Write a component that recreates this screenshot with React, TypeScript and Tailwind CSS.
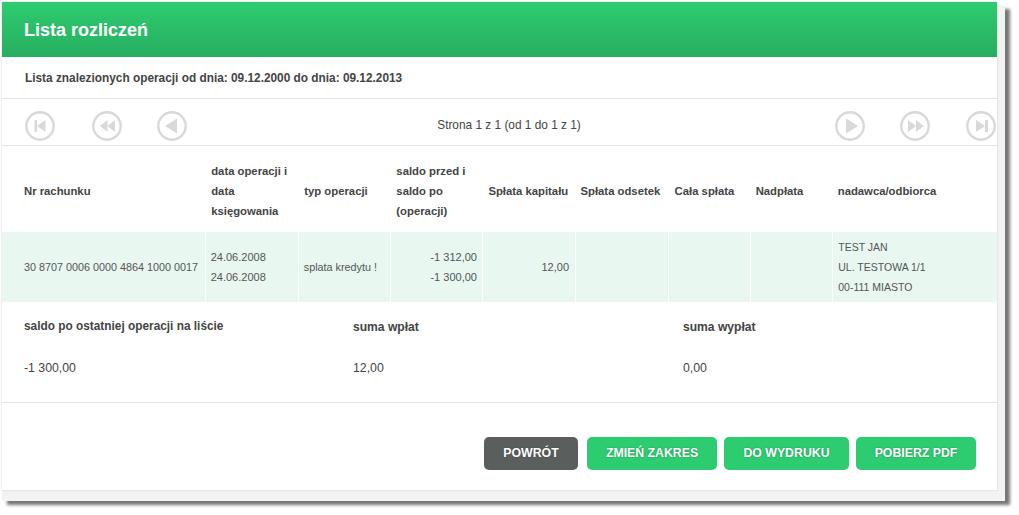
const font = { fontFamily: '"Liberation Sans", Arial, sans-serif' }

const columns = [
  { label: ['Nr rachunku'], width: 'w-[203px]', pad: 'pl-[22px]' },
  { label: ['data operacji i', 'data', 'księgowania'], width: 'w-[93px]', pad: 'pl-[6px]' },
  { label: ['typ operacji'], width: 'w-[92px]', pad: 'pl-[6px]' },
  { label: ['saldo przed i', 'saldo po', '(operacji)'], width: 'w-[92px]', pad: 'pl-[6px]' },
  { label: ['Spłata kapitału'], width: 'w-[93px]', pad: 'pl-[6px]' },
  { label: ['Spłata odsetek'], width: 'w-[93px]', pad: 'pl-[5px]' },
  { label: ['Cała spłata'], width: 'w-[82px]', pad: 'pl-[6px]' },
  { label: ['Nadpłata'], width: 'w-[82px]', pad: 'pl-[5px]' },
  { label: ['nadawca/odbiorca'], width: 'w-[164px]', pad: 'pl-[5px]' },
]

function NavIcon({ kind }: { kind: 'first' | 'prev2' | 'prev' | 'next' | 'next2' | 'last' }) {
  return (
    <svg width="30" height="30" viewBox="0 0 30 30" className="shrink-0">
      <circle cx="15" cy="15" r="13.7" fill="#fff" stroke="#d9d9d9" strokeWidth="2.4" />
      <g fill="#d9d9d9">
        {kind === 'first' && <path d="M9.5 9H12v12H9.5zM20.5 9v12L12 15z" />}
        {kind === 'prev2' && <path d="M15.5 9v12L8 15zM23 9v12l-7.5-6z" />}
        {kind === 'prev' && <path d="M20 7.5v15L8 15z" />}
        {kind === 'next' && <path d="M11 7.5v15L23 15z" />}
        {kind === 'next2' && <path d="M8 9v12l8-6zM16 9v12l8-6z" />}
        {kind === 'last' && <path d="M10 9v12l9-6zM19 9h3v12h-3z" />}
      </g>
    </svg>
  )
}

function Btn({ label, dark, width }: { label: string; dark?: boolean; width: string }) {
  return (
    <button
      className={`${width} h-[33px] rounded-[5px] text-white text-[12.3px] font-bold [text-shadow:0_0_2px_rgba(0,0,0,0.3)] ${dark ? 'bg-[#5a5f5d]' : 'bg-[#2ecc71]'}`}
    >
      {label}
    </button>
  )
}

export default function App() {
  return (
    <div className="h-[515px] w-[1019px] overflow-hidden bg-white pl-[2px] pt-[2px]" style={font}>
      <div className="flex h-[488px] w-[995px] flex-col bg-white text-[#444] shadow-[0_0_2px_#ccc,4px_7px_0_4px_#f3f3f3,9px_11px_3px_4px_#777]">
        {/* Header */}
        <div className="flex h-[55px] items-center bg-gradient-to-b from-[#2ecc71] to-[#27ae60] pl-[22px] pt-[1px]">
          <h1 className="text-[18px] font-bold text-white">Lista rozliczeń</h1>
        </div>

        <div className="flex h-[42px] items-center border-b border-[#e3e3e3] pl-[23px] pt-[2px] text-[11.85px] font-bold">
          Lista znalezionych operacji od dnia: 09.12.2000 do dnia: 09.12.2013
        </div>

        {/* Pagination */}
        <div className="flex h-[47px] items-center border-b border-[#e3e3e3] pl-[23px] pt-[8px]">
          <div className="flex w-[162px] gap-[37px]">
            <NavIcon kind="first" />
            <NavIcon kind="prev2" />
            <div className="-ml-[2px]">
              <NavIcon kind="prev" />
            </div>
          </div>
          <div className="flex-1 pr-[4px] text-center text-[11.85px]">Strona 1 z 1 (od 1 do 1 z 1)</div>
          <div className="flex w-[162px] gap-[35px]">
            <NavIcon kind="next" />
            <NavIcon kind="next2" />
            <div className="ml-[1px]">
              <NavIcon kind="last" />
            </div>
          </div>
        </div>

        {/* Operations */}
        <table className="w-[995px] table-fixed border-collapse text-[11px] leading-[20px]">
          <thead>
            <tr className="h-[86px]">
              {columns.map((c, i) => (
                <th key={i} className={`${c.width} ${c.pad} pt-[4px] text-left align-middle text-[11.3px] font-bold`}>
                  {c.label.map((l) => (
                    <div key={l} className="whitespace-nowrap">{l}</div>
                  ))}
                </th>
              ))}
            </tr>
          </thead>
          <tbody>
            <tr className="h-[70px] bg-[#e8f8f0] text-[#555] [&>td]:border-l [&>td]:border-white [&>td:first-child]:border-l-0">
              <td className="whitespace-nowrap pl-[22px] text-[10.8px]">30 8707 0006 0000 4864 1000 0017</td>
              <td className="pl-[5px]">
                <div>24.06.2008</div>
                <div>24.06.2008</div>
              </td>
              <td className="pl-[5px] text-[10.8px]">splata kredytu !</td>
              <td className="pr-[5px] text-right">
                <div>-1 312,00</div>
                <div>-1 300,00</div>
              </td>
              <td className="pr-[6px] text-right">12,00</td>
              <td />
              <td />
              <td />
              <td className="pl-[5px] text-[10.5px]">
                <div>TEST JAN</div>
                <div>UL. TESTOWA 1/1</div>
                <div>00-111 MIASTO</div>
              </td>
            </tr>
          </tbody>
        </table>

        {/* Summary */}
        <div className="grid h-[101px] grid-cols-[329px_330px_1fr] border-b border-[#e3e3e3] pl-[22px] pt-[16px] text-[12.3px]">
          <div>
            <div className="text-[11.85px] font-bold">saldo po ostatniej operacji na liście</div>
            <div className="mt-[23px]">-1 300,00</div>
          </div>
          <div>
            <div className="text-[12.1px] font-bold">suma wpłat</div>
            <div className="mt-[23px]">12,00</div>
          </div>
          <div>
            <div className="text-[12.1px] font-bold">suma wypłat</div>
            <div className="mt-[23px]">0,00</div>
          </div>
        </div>

        {/* Actions */}
        <div className="flex flex-1 items-start justify-end gap-[7px] pr-[21px] pt-[34px]">
          <Btn label="POWRÓT" dark width="mr-[2px] w-[94px]" />
          <Btn label="ZMIEŃ ZAKRES" width="w-[130px]" />
          <Btn label="DO WYDRUKU" width="w-[125px]" />
          <Btn label="POBIERZ PDF" width="w-[120px]" />
        </div>
      </div>
    </div>
  )
}
